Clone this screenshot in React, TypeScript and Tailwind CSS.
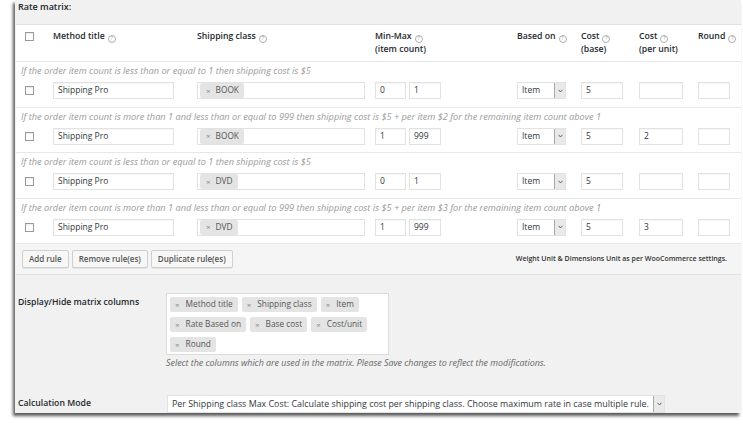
import React from "react";

type Rule = {
  desc: string;
  cls: string;
  min: string;
  max: string;
  base: string;
  unit: string;
};

const rules: Rule[] = [
  {
    desc: "If the order item count is less than or equal to 1 then shipping cost is $5",
    cls: "BOOK",
    min: "0",
    max: "1",
    base: "5",
    unit: "",
  },
  {
    desc: "If the order item count is more than 1 and less than or equal to 999 then shipping cost is $5 + per item $2 for the remaining item count above 1",
    cls: "BOOK",
    min: "1",
    max: "999",
    base: "5",
    unit: "2",
  },
  {
    desc: "If the order item count is less than or equal to 1 then shipping cost is $5",
    cls: "DVD",
    min: "0",
    max: "1",
    base: "5",
    unit: "",
  },
  {
    desc: "If the order item count is more than 1 and less than or equal to 999 then shipping cost is $5 + per item $3 for the remaining item count above 1",
    cls: "DVD",
    min: "1",
    max: "999",
    base: "5",
    unit: "3",
  },
];

const columnTags = [
  ["Method title", "Shipping class", "Item"],
  ["Rate Based on", "Base cost", "Cost/unit"],
  ["Round"],
];

function Help() {
  return (
    <span className="inline-flex items-center justify-center w-[8px] h-[8px] rounded-full border border-[#b0b0b0] text-[5.5px] leading-none text-[#a0a0a0] font-normal ml-[3px] align-[-1px]">
      ?
    </span>
  );
}

function Checkbox() {
  return <span className="block w-[9px] h-[9px] border border-[#9a9a9a] bg-white shadow-[inset_0_1px_1px_rgba(0,0,0,0.08)]" />;
}

function Field({ value, w }: { value: string; w: string }) {
  return (
    <span className={`flex items-center h-[17px] ${w} bg-white border border-[#e2e2e2] pl-[4px] text-[8.5px] text-[#32373c] shadow-[inset_0_1px_1px_rgba(0,0,0,0.04)]`}>
      {value}
    </span>
  );
}

function Arrow() {
  return (
    <span className="flex items-center justify-center w-[11px] h-full bg-[#e9e9e9] border-l border-[#a8a8a8]">
      <svg width="5" height="4" viewBox="0 0 5 4">
        <path d="M0.6 0.8 L2.5 3 L4.4 0.8" fill="none" stroke="#555" strokeWidth="0.9" />
      </svg>
    </span>
  );
}

function Tag({ label, small }: { label: string; small?: boolean }) {
  return (
    <span className={`inline-flex items-center h-[15px] bg-[#e4e4e4] rounded-[2px] text-[#555] ${small ? "pl-[6px] pr-[5px] text-[8.3px]" : "pl-[5px] pr-[5px] text-[8.3px]"}`}>
      <span className={`text-[#888] text-[8px] ${small ? "mr-[5px]" : "mr-[6px]"}`}>×</span>
      {label}
    </span>
  );
}

const cells = ["w-[34px] pl-[9px]", "w-[145px] pl-[3px]", "w-[177px] pl-[2px]", "w-[142px] pl-[3px]", "w-[64px] pl-[3px]", "w-[58px] pl-[3px]", "w-[59px] pl-[3px]", "flex-1 pl-[3px]"];

function RuleRow({ r }: { r: Rule }) {
  return (
    <div className="border-b border-[#e8e8e8] pt-[3px] pb-[7.5px]">
      <div className="pl-[5px] leading-[11px] text-[9.2px] italic text-[#9a9a9a] whitespace-nowrap">{r.desc}</div>
      <div className="flex items-center mt-[6px]">
        <div className={cells[0]}>
          <Checkbox />
        </div>
        <div className={cells[1]}>
          <Field value="Shipping Pro" w="w-[121px]" />
        </div>
        <div className={cells[2]}>
          <span className="flex items-end h-[17px] w-[168px] bg-white border border-[#e2e2e2] pl-[2px]">
            <Tag label={r.cls} small />
          </span>
        </div>
        <div className={`${cells[3]} flex gap-[3px]`}>
          <Field value={r.min} w="w-[31px]" />
          <Field value={r.max} w="w-[32px]" />
        </div>
        <div className={cells[4]}>
          <span className="flex items-center justify-between h-[17px] w-[49px] bg-white border border-[#e2e2e2] pl-[4px] text-[8.5px] text-[#32373c]">
            Item
            <Arrow />
          </span>
        </div>
        <div className={cells[5]}>
          <Field value={r.base} w="w-[42px]" />
        </div>
        <div className={cells[6]}>
          <Field value={r.unit} w="w-[44px]" />
        </div>
        <div className={cells[7]}>
          <Field value="" w="w-[32px]" />
        </div>
      </div>
    </div>
  );
}

function Button({ label }: { label: string }) {
  return (
    <span className="flex items-center h-[18px] px-[6px] bg-[#f7f7f7] border border-[#cfcfcf] rounded-[2px] text-[8px] font-semibold text-[#555] shadow-[0_1px_0_#e5e5e5]">
      {label}
    </span>
  );
}

export default function App() {
  return (
    <div className="w-[743px] h-[429px] bg-white overflow-hidden font-['Open_Sans',sans-serif]">
      <div className="ml-[15px] w-[726px] h-[413px] bg-[#f1f1f1] shadow-[-2px_3px_3px_rgba(0,0,0,0.65)] pl-[1px]">
        <div className="pl-[2px] leading-[14px] text-[9px] font-semibold text-[#23282d]">Rate matrix:</div>

        <div className="mt-[10px] bg-white border-y border-[#e1e1e1]">
          <div className="flex h-[37px] pt-[5px] border-b border-[#e8e8e8] text-[8.7px] font-semibold text-[#23282d] leading-[13px]">
            <div className={`${cells[0]} pt-[2px]`}>
              <Checkbox />
            </div>
            <div className={cells[1]}>
              Method title
              <Help />
            </div>
            <div className={cells[2]}>
              Shipping class
              <Help />
            </div>
            <div className={cells[3]}>
              Min-Max
              <Help />
              <br />
              (item count)
            </div>
            <div className={cells[4]}>
              Based on
              <Help />
            </div>
            <div className={cells[5]}>
              Cost
              <Help />
              <br />
              (base)
            </div>
            <div className={cells[6]}>
              Cost
              <Help />
              <br />
              (per unit)
            </div>
            <div className={cells[7]}>
              Round
              <Help />
            </div>
          </div>

          {rules.map((r, i) => (
            <RuleRow key={i} r={r} />
          ))}

          <div className="flex items-center justify-between h-[30px] bg-[#f5f5f5] pl-[6px] pr-[14px]">
            <div className="flex gap-[3px]">
              <Button label="Add rule" />
              <Button label="Remove rule(es)" />
              <Button label="Duplicate rule(es)" />
            </div>
            <span className="text-[7px] font-semibold text-[#333]">Weight Unit &amp; Dimensions Unit as per WooCommerce settings.</span>
          </div>
        </div>

        <div className="flex mt-[18px]">
          <div className="w-[150px] pl-[2px] pt-[3px] text-[8.7px] font-semibold text-[#23282d] leading-[13px]">Display/Hide matrix columns</div>
          <div>
            <div className="w-[223px] bg-white border border-[#dcdcdc] pt-[3px] pb-[2px] pl-[3px] flex flex-col gap-[5px]">
              {columnTags.map((row, i) => (
                <div key={i} className="flex gap-[4px]">
                  {row.map((t) => (
                    <Tag key={t} label={t} />
                  ))}
                </div>
              ))}
            </div>
            <div className="mt-[2px] text-[8.9px] italic text-[#666] leading-[11px]">
              Select the columns which are used in the matrix. Please Save changes to reflect the modifications.
            </div>
          </div>
        </div>

        <div className="flex items-center mt-[27px]">
          <div className="w-[151px] pl-[2px] text-[8.7px] font-semibold text-[#23282d]">Calculation Mode</div>
          <span className="flex items-center justify-between h-[18px] w-[498px] bg-white border border-[#e2e2e2] pl-[4px] text-[8.9px] text-[#32373c]">
            Per Shipping class Max Cost: Calculate shipping cost per shipping class. Choose maximum rate in case multiple rule.
            <Arrow />
          </span>
        </div>
      </div>
    </div>
  );
}
